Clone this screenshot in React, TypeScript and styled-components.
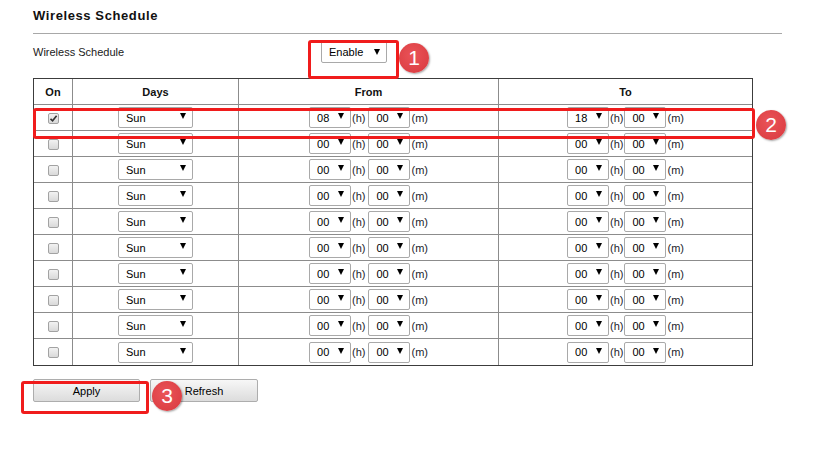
import React from 'react'
import styled, { createGlobalStyle } from 'styled-components'

const GlobalStyle = createGlobalStyle`
  html, body {
    margin: 0;
    padding: 0;
    background: #fff;
  }
  body {
    font-family: "Liberation Sans", Arial, sans-serif;
    font-size: 11px;
    color: #111;
  }
`

const Page = styled.div`
  position: relative;
  width: 821px;
  height: 470px;
  padding: 0 39px 0 33px;
  box-sizing: border-box;
`

const Title = styled.h1`
  margin: 8px 0 0;
  padding-bottom: 9px;
  font-size: 13px;
  line-height: 16px;
  font-weight: bold;
  letter-spacing: 0.6px;
  color: #111;
  border-bottom: 1px solid #a8a8a8;
`

const FormRow = styled.div`
  display: flex;
  align-items: center;
  height: 22px;
  margin-top: 7px;
`

const FormLabel = styled.div`
  width: 288px;
  color: #1a1a1a;
`

const Schedule = styled.table`
  margin-top: 15px;
  width: 720px;
  table-layout: fixed;
  border-collapse: separate;
  border-spacing: 0;
  border: 1px solid #3c3c3c;
`

const HeadCell = styled.th<{ $w: number }>`
  box-sizing: border-box;
  width: ${(p) => p.$w}px;
  height: 26px;
  padding: 0;
  font-weight: bold;
  text-align: center;
  color: #111;
  border-right: 1px solid #8c8c8c;
  border-bottom: 1px solid #8c8c8c;
  &:last-child {
    border-right: none;
  }
`

const Row = styled.tr`
  &:last-child td {
    border-bottom: none;
  }
`

const Cell = styled.td`
  box-sizing: border-box;
  height: 26px;
  padding: 0;
  text-align: center;
  vertical-align: middle;
  border-right: 1px solid #8c8c8c;
  border-bottom: 1px solid #8c8c8c;
  &:last-child {
    border-right: none;
  }
`

const Check = styled.span<{ $on?: boolean }>`
  display: inline-flex;
  align-items: center;
  justify-content: center;
  width: 11px;
  height: 11px;
  box-sizing: border-box;
  border: 1px solid #a2a2a2;
  border-radius: 2px;
  background: linear-gradient(#f2f2f2, #d9d9d9);
  vertical-align: middle;
  margin-left: 1px;
`

const SelectWrap = styled.span<{ $w: number; $h?: number }>`
  position: relative;
  display: inline-block;
  width: ${(p) => p.$w}px;
  height: ${(p) => p.$h ?? 21}px;
  vertical-align: middle;
`

const SelectBox = styled.select`
  appearance: none;
  -webkit-appearance: none;
  display: block;
  width: 100%;
  height: 100%;
  box-sizing: border-box;
  margin: 0;
  padding: 0 0 0 7px;
  border: 1px solid #a9a9a9;
  border-radius: 2px;
  background: #fff;
  font: 11px "Liberation Sans", Arial, sans-serif;
  color: #000;
  outline: none;
`

const Arrow = styled.span<{ $top: number }>`
  position: absolute;
  right: 7px;
  top: ${(p) => p.$top}px;
  width: 0;
  height: 0;
  border-left: 3.5px solid transparent;
  border-right: 3.5px solid transparent;
  border-top: 6px solid #000;
  pointer-events: none;
`

const TimeGroup = styled.div`
  display: inline-flex;
  align-items: center;
  vertical-align: middle;
`

const Unit = styled.span<{ $gap: number }>`
  margin: 0 ${(p) => p.$gap}px 0 1px;
  color: #1c1c2c;
`

const Actions = styled.div`
  display: flex;
  gap: 10px;
  margin-top: 13px;
`

const Button = styled.button<{ $w: number }>`
  width: ${(p) => p.$w}px;
  height: 23px;
  box-sizing: border-box;
  padding: 0;
  border: 1px solid #adadad;
  border-radius: 2px;
  background: linear-gradient(#f7f7f7, #dcdcdc);
  font: 11px "Liberation Sans", Arial, sans-serif;
  color: #000;
`

const Marker = styled.div<{ $x: number; $y: number; $w: number; $h: number }>`
  position: absolute;
  left: ${(p) => p.$x}px;
  top: ${(p) => p.$y}px;
  width: ${(p) => p.$w}px;
  height: ${(p) => p.$h}px;
  box-sizing: border-box;
  border: 3px solid #f01c1c;
  border-radius: 3px;
  pointer-events: none;
`

const Badge = styled.div<{ $cx: number; $cy: number }>`
  position: absolute;
  left: ${(p) => p.$cx - 15}px;
  top: ${(p) => p.$cy - 15}px;
  width: 30px;
  height: 30px;
  border-radius: 50%;
  background: radial-gradient(circle at 45% 40%, #ea5358, #d8393e);
  box-shadow: 1px 1px 2px rgba(0, 0, 0, 0.35);
  color: #fff;
  font: 21px/30px "Liberation Sans", Arial, sans-serif;
  text-align: center;
`

type DropProps = { value: string; w: number; h?: number; top?: number }

function Drop({ value, w, h, top }: DropProps) {
  return (
    <SelectWrap $w={w} $h={h}>
      <SelectBox value={value} onChange={() => {}}>
        <option>{value}</option>
      </SelectBox>
      <Arrow $top={top ?? 6} />
    </SelectWrap>
  )
}

function Time({ h, m, gap }: { h: string; m: string; gap: number }) {
  return (
    <TimeGroup>
      <Drop value={h} w={42} />
      <Unit $gap={gap}>(h)</Unit>
      <Drop value={m} w={42} />
      <Unit $gap={0}>(m)</Unit>
    </TimeGroup>
  )
}

const rows = Array.from({ length: 10 }, (_, i) =>
  i === 0
    ? { on: true, from: '08', to: '18' }
    : { on: false, from: '00', to: '00' },
)

export default function App() {
  return (
    <>
      <GlobalStyle />
      <Page>
        <Title>Wireless Schedule</Title>
        <FormRow>
          <FormLabel>Wireless Schedule</FormLabel>
          <Drop value="Enable" w={66} h={22} top={8} />
        </FormRow>
        <Schedule>
          <thead>
            <tr>
              <HeadCell $w={39}>On</HeadCell>
              <HeadCell $w={166}>Days</HeadCell>
              <HeadCell $w={260}>From</HeadCell>
              <HeadCell $w={253}>To</HeadCell>
            </tr>
          </thead>
          <tbody>
            {rows.map((r, i) => (
              <Row key={i}>
                <Cell>
                  <Check $on={r.on}>
                    {r.on && (
                      <svg width="9" height="9" viewBox="0 0 9 9">
                        <path d="M1.5 4.8 L3.6 6.8 L7.6 1.8" fill="none" stroke="#333" strokeWidth="1.6" />
                      </svg>
                    )}
                  </Check>
                </Cell>
                <Cell>
                  <Drop value="Sun" w={75} />
                </Cell>
                <Cell>
                  <Time h={r.from} m="00" gap={3} />
                </Cell>
                <Cell>
                  <Time h={r.to} m="00" gap={1} />
                </Cell>
              </Row>
            ))}
          </tbody>
        </Schedule>
        <Actions>
          <Button $w={107}>Apply</Button>
          <Button $w={108}>Refresh</Button>
        </Actions>

        <Marker $x={308} $y={32} $w={91} $h={39} />
        <Badge $cx={414} $cy={50}>1</Badge>
        <Marker $x={33} $y={100} $w={722} $h={31} />
        <Badge $cx={771} $cy={117}>2</Badge>
        <Marker $x={21} $y={373} $w={128} $h={33} />
        <Badge $cx={167} $cy={388}>3</Badge>
      </Page>
    </>
  )
}
